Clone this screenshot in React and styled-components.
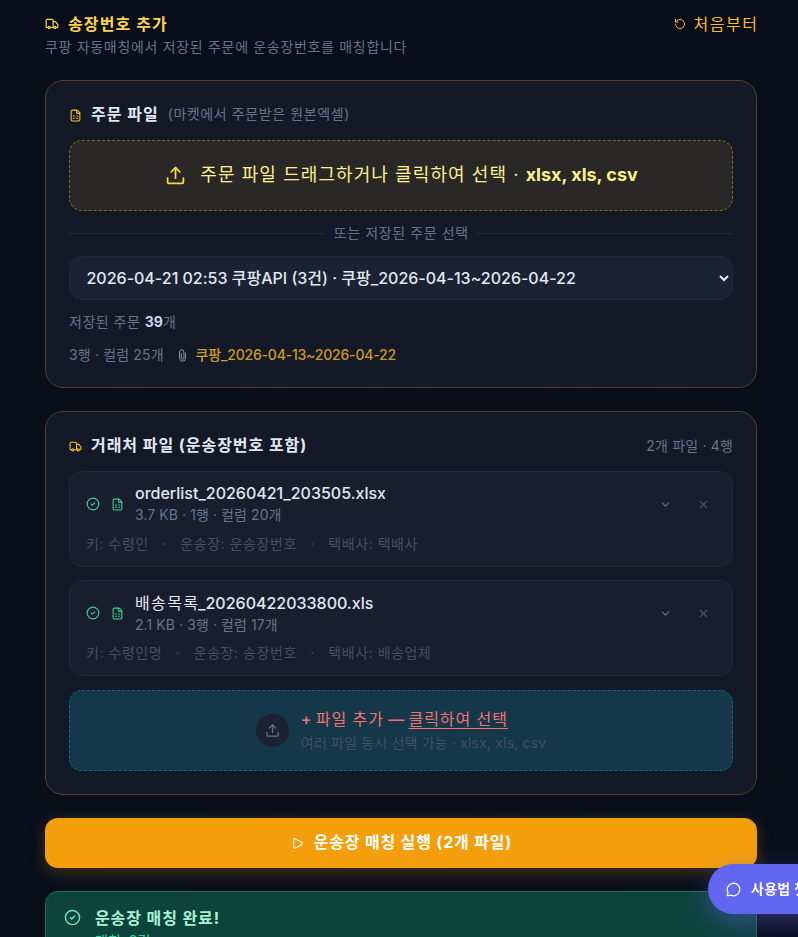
import React, {useState} from "react";
import styled, {createGlobalStyle} from "styled-components";
import {
    Truck, RotateCcw, FileSpreadsheet, Upload, CircleCheck, ChevronDown, X, Play, MessageCircle
} from "lucide-react";

const GlobalStyle = createGlobalStyle`
  * {
    box-sizing: border-box;
  }

  body {
    margin: 0;
    background: #080d19;
    font-family: Inter, "Noto Sans CJK KR", sans-serif;
    overflow: hidden;
  }

  svg {
    flex-shrink: 0;
  }
`;

const Page = styled.div`
  height: 937px;
  overflow: hidden;
  padding: 12px 41px 0 45px;
  background: linear-gradient(90deg, #080e1a, #0a0e1b 50%, #080e1a);
`;

const Text = styled.span`
  font-size: ${({$size}) => $size || 14}px;
  line-height: ${({$line}) => $line || 24}px;
  font-weight: ${({$weight}) => $weight || 400};
  color: ${({$color}) => $color || "#64748b"};
  letter-spacing: ${({$track}) => $track || 0}px;
  margin-right: ${({$track}) => -($track || 0)}px;
  white-space: pre;
`;

const Header = styled.header`
  height: 68px;
  display: flex;
  justify-content: space-between;
  align-items: flex-start;
`;

const HeaderTitle = styled.div`
  height: 23px;
  display: flex;
  align-items: center;
  gap: 9px;
`;

const Row = styled.div`
  display: flex;
  align-items: center;
  gap: ${({$gap}) => $gap || 0}px;
`;

const Card = styled.section`
  height: ${({$height}) => $height}px;
  margin-bottom: 23px;
  padding: 21px 23px 0;
  background: #141928;
  border: 1px solid #573f21;
  border-radius: 18px;
`;

const CardTitle = styled.div`
  height: 24px;
  display: flex;
  align-items: center;

  svg {
    margin: 3px 9px 0 0;
  }
`;

const CardHint = styled.div`
  margin-left: 10px;
`;

const CardCount = styled.div`
  margin-left: auto;
  padding-top: 2px;
`;

const DropZone = styled.div`
  height: 71px;
  margin-top: 14px;
  display: flex;
  align-items: center;
  justify-content: center;
  gap: 14px;
  background: #2a2827;
  border: 1px dashed #89691a;
  border-radius: 13px;

  b {
    letter-spacing: 0;
  }

  span {
    margin-bottom: 1px;
  }
`;

const Divider = styled.div`
  height: 45px;
  display: flex;
  align-items: center;
  gap: 9px;

  &::before, &::after {
    content: "";
    flex: 1;
    height: 1px;
    background: #1e2840;
  }

  span {
    margin-bottom: 2px;
  }
`;

const OrderSelect = styled.select`
  display: block;
  width: 100%;
  height: 44px;
  padding: 0 13px 0 12.5px;
  font-family: inherit;
  font-size: 16px;
  font-weight: 500;
  color: #e2e8f0;
  background: #1a2234;
  border: 1px solid #1e2a44;
  border-radius: 13px;
`;

const OrderInfo = styled.div`
  margin-top: 10px;
  display: flex;
  flex-direction: column;
  gap: 9px;
`;

const ClipIcon = styled.svg`
  width: 9px;
  height: 13px;
  margin: 0 9px 0 14px;
  fill: none;
  stroke: #8b8f98;
  stroke-width: 1;
  stroke-linecap: round;
`;

const FileList = styled.div`
  padding-top: 14px;
  display: flex;
  flex-direction: column;
  gap: 13px;
`;

const FileCard = styled.div`
  height: 96px;
  padding: 9px 22px 0 16px;
  background: #181e2e;
  border: 1px solid #1c2742;
  border-radius: 13px;
`;

const FileTop = styled.div`
  height: 46px;
  display: flex;
  align-items: center;
`;

const FileName = styled.div`
  flex: 1;
  margin-left: 11px;
  padding-bottom: ${({$lift}) => $lift || 0}px;
  display: flex;
  flex-direction: column;
`;

const FileKeys = styled.div`
  margin-top: 5px;
  display: flex;
  gap: 14px;
`;

const AddZone = styled.div`
  height: 81px;
  margin-top: 14px;
  display: flex;
  align-items: center;
  justify-content: center;
  gap: 12px;
  background: #14374a;
  border: 1px dashed #106a80;
  border-radius: 13px;

  u {
    text-underline-offset: 3px;
    text-decoration-thickness: 1px;
  }
`;

const UploadCircle = styled.div`
  width: 33px;
  height: 33px;
  display: flex;
  align-items: center;
  justify-content: center;
  color: #64748b;
  background: #1a2234;
  border-radius: 50%;
`;

const Column = styled.div`
  display: flex;
  flex-direction: column;
`;

const RunButton = styled.button`
  width: 100%;
  height: 50px;
  padding-bottom: 3px;
  display: flex;
  align-items: center;
  justify-content: center;
  gap: 10px;
  color: #fff;
  font-family: inherit;
  background: #f59e0b;
  border: 0;
  border-radius: 13px;
  box-shadow: 0 4px 16px rgba(245, 158, 11, 0.25);

  svg {
    margin-top: 3px;
  }
`;

const Result = styled.div`
  height: 120px;
  margin-top: 23px;
  padding: 14px 18px;
  display: flex;
  align-items: flex-start;
  gap: 14px;
  color: #6ee7b7;
  background: #0c433d;
  border: 1px solid #1c7058;
  border-radius: 13px;

  svg {
    margin-top: 3px;
  }
`;

const ChatButton = styled.button`
  position: fixed;
  left: 708px;
  top: 864px;
  height: 50px;
  padding: 0 20px 0 18px;
  display: flex;
  align-items: center;
  gap: 10px;
  color: #fff;
  font-family: inherit;
  background: #6366f1;
  border: 0;
  border-radius: 25px;
  box-shadow: 0 8px 26px rgba(99, 102, 241, 0.4);
`;

const files = [
    {
        name: "orderlist_20260421_203505.xlsx",
        info: "3.7 KB · 1행 · 컬럼 20개",
        keys: ["키: 수령인", "·", "운송장: 운송장번호", "·", "택배사: 택배사"],
        lift: 2,
    },
    {
        prefix: "배송목록",
        name: "_20260422033800.xls",
        info: "2.1 KB · 3행 · 컬럼 17개",
        keys: ["키: 수령인명", "·", "운송장: 송장번호", "·", "택배사: 배송업체"],
    },
];

function FileItem({file}) {
    return (
        <FileCard>
            <FileTop>
                <Row $gap={11}>
                    <CircleCheck size={14} color="#34d399"/>
                    <FileSpreadsheet size={13} color="#34d399"/>
                </Row>
                <FileName $lift={file.lift}>
                    <Row>
                        {file.prefix && <Text $size={16} $color="#e2e8f0" $track={1.4}>{file.prefix}</Text>}
                        <Text $size={16} $weight={500} $color="#e2e8f0">{file.name}</Text>
                    </Row>
                    <Text $line={20} $track={0.08}>{file.info}</Text>
                </FileName>
                <Row $gap={25}>
                    <ChevronDown size={13} color="#64748b"/>
                    <X size={13} color="#475569"/>
                </Row>
            </FileTop>
            <FileKeys>
                {file.keys.map((key, i) => <Text key={i} $color="#434f62" $track={0.55}>{key}</Text>)}
            </FileKeys>
        </FileCard>
    );
}

function App() {
    const [order, setOrder] = useState("0");

    return (
        <>
            <GlobalStyle/>
            <Page>
                <Header>
                    <Column>
                        <HeaderTitle>
                            <Truck size={14} color="#fcd34d"/>
                            <Text $size={16} $weight={700} $color="#fcd34d" $track={1.1}>송장번호 추가</Text>
                        </HeaderTitle>
                        <Text $track={0.68}>쿠팡 자동매칭에서 저장된 주문에 운송장번호를 매칭합니다</Text>
                    </Column>
                    <Row $gap={8}>
                        <RotateCcw size={12} color="#fbbf24"/>
                        <Text $size={16} $color="#fbbf24" $track={1.5}>처음부터</Text>
                    </Row>
                </Header>

                <Card $height={308}>
                    <CardTitle>
                        <FileSpreadsheet size={13} color="#fbbf24"/>
                        <Text $size={16} $weight={700} $color="#e2e8f0" $track={1}>주문 파일</Text>
                        <CardHint><Text $track={0.6}>(마켓에서 주문받은 원본엑셀)</Text></CardHint>
                    </CardTitle>
                    <DropZone>
                        <Upload size={21} color="#fdd83f"/>
                        <Text $size={18} $color="#fef08a" $track={1.08}>
                            주문 파일 드래그하거나 클릭하여 선택 · <b>xlsx, xls, csv</b>
                        </Text>
                    </DropZone>
                    <Divider><Text $track={0.6}>또는 저장된 주문 선택</Text></Divider>
                    <OrderSelect value={order} onChange={(e) => setOrder(e.target.value)}>
                        <option value="0">2026-04-21 02:53 쿠팡API (3건) · 쿠팡_2026-04-13~2026-04-22</option>
                    </OrderSelect>
                    <OrderInfo>
                        <Text $track={0.5}>저장된 주문 <Text $weight={700} $color="#cbd5e1">39</Text>개</Text>
                        <Row>
                            <Text $track={0.15}>3행 · 컬럼 25개</Text>
                            <ClipIcon viewBox="0 0 9 13">
                                <path d="M7.5 4v5.2a3 3 0 0 1-6 0V3a2.2 2.2 0 0 1 4.4 0v6a1.3 1.3 0 0 1-2.6 0V4.2"/>
                            </ClipIcon>
                            <Text $weight={500} $color="#d19a22" $track={-0.2}>쿠팡_2026-04-13~2026-04-22</Text>
                        </Row>
                    </OrderInfo>
                </Card>

                <Card $height={384}>
                    <CardTitle>
                        <Truck size={13} color="#fbbf24"/>
                        <Text $size={16} $weight={700} $color="#e2e8f0" $track={0.95}>거래처 파일 (운송장번호 포함)</Text>
                        <CardCount><Text $track={0.2}>2개 파일 · 4행</Text></CardCount>
                    </CardTitle>
                    <FileList>
                        {files.map((file) => <FileItem key={file.name} file={file}/>)}
                    </FileList>
                    <AddZone>
                        <UploadCircle><Upload size={15}/></UploadCircle>
                        <Column>
                            <Text $size={16} $color="#f87171" $track={0.95}>
                                <Text $size={16} $weight={500} $color="#f87171">+ </Text>
                                파일 추가
                                <Text $size={16} $weight={500} $color="#f87171"> — </Text>
                                <u>클릭하여 선택</u>
                            </Text>
                            <Text $color="#3f5064" $track={0.17}>여러 파일 동시 선택 가능 · xlsx, xls, csv</Text>
                        </Column>
                    </AddZone>
                </Card>

                <RunButton>
                    <Play size={13}/>
                    <Text $size={16} $weight={700} $color="#fff" $track={0.82}>운송장 매칭 실행 (2개 파일)</Text>
                </RunButton>

                <Result>
                    <CircleCheck size={17}/>
                    <Column>
                        <Text $size={16} $weight={700} $color="#a7f3d0" $track={0.9}>운송장 매칭 완료!</Text>
                        <Text $line={22} $color="#34d399">매칭: 3건</Text>
                    </Column>
                </Result>
            </Page>
            <ChatButton>
                <MessageCircle size={15}/>
                <Text $size={14} $weight={700} $color="#fff" $track={0.3}>사용법 챗봇</Text>
            </ChatButton>
        </>
    );
}

export default App;
